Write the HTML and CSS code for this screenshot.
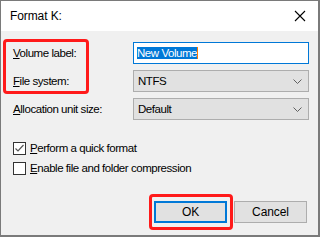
FILE: index.html
```html
<!DOCTYPE html>
<html>
<head>
<meta charset="utf-8">
<link rel="stylesheet" href="styles.css">
</head>
<body>
<div class="window">
  <div class="titlebar">
    <span class="title">Format K:</span>
    <svg class="close" width="12" height="12" viewBox="0 0 12 12"><path d="M1 1L11 11M11 1L1 11" stroke="#000" stroke-width="1.1" fill="none"/></svg>
  </div>
  <div class="content">
    <div class="form">
      <label class="lbl"><u>V</u>olume label:</label>
      <div class="input"><span class="sel">New Volume</span><span class="caret"></span></div>
      <label class="lbl"><u>F</u>ile system:</label>
      <div class="combo"><span>NTFS</span><svg class="chev" width="9" height="5" viewBox="0 0 9 5"><path d="M0.5 0.5L4.5 4.5L8.5 0.5" stroke="#606060" stroke-width="1" fill="none"/></svg></div>
      <label class="lbl"><u>A</u>llocation unit size:</label>
      <div class="combo"><span>Default</span><svg class="chev" width="9" height="5" viewBox="0 0 9 5"><path d="M0.5 0.5L4.5 4.5L8.5 0.5" stroke="#606060" stroke-width="1" fill="none"/></svg></div>
    </div>
    <div class="checks">
      <div class="check"><span class="box"><svg width="11" height="11" viewBox="0 0 11 11"><path d="M1.5 5.5L4 8L9.5 2" stroke="#555" stroke-width="1.2" fill="none"/></svg></span><span><u>P</u>erform a quick format</span></div>
      <div class="check"><span class="box"></span><span><u>E</u>nable file and folder compression</span></div>
    </div>
    <div class="buttons">
      <button class="btn primary">OK</button>
      <button class="btn">Cancel</button>
    </div>
    <div class="mark mark-labels"></div>
    <div class="mark mark-ok"></div>
  </div>
</div>
</body>
</html>
```
FILE: styles.css
```css
html, body { margin: 0; padding: 0; background: #ffffff; }
body { font-family: "Liberation Sans", Arial, sans-serif; font-size: 11.5px; letter-spacing: -0.45px; color: #000; }
.window {
  width: 320px; height: 237px; box-sizing: border-box;
  border: 1px solid #7a7a7a; border-right-width: 2px; border-bottom-width: 2px;
  display: flex; flex-direction: column; background: #f0f0f0;
}
.titlebar {
  height: 30px; background: #fff; display: flex; align-items: center;
  justify-content: space-between; padding: 0 12px 0 9px; flex: none;
}
.title { font-size: 12px; letter-spacing: -0.1px; }
.close { display: block; }
.content { position: relative; flex: 1; padding: 11px 0 0 12px; display: flex; flex-direction: column; }
.form { display: grid; grid-template-columns: 120px 176px; row-gap: 6px; align-items: center; }
.lbl { line-height: 22px; }
.input {
  height: 22px; box-sizing: border-box; border: 1px solid #0078d7; background: #fff;
  display: flex; align-items: center; padding-left: 3px;
}
.sel { background: #0078d7; color: #fff; line-height: 12px; }
.caret { width: 1px; height: 12px; background: #ff7800; }
.combo {
  height: 22px; box-sizing: border-box; border: 1px solid #adadad; background: #e1e1e1;
  display: flex; align-items: center; justify-content: space-between; padding: 0 6px 0 4px;
}
.chev { display: block; }
.checks { margin-top: 22px; display: flex; flex-direction: column; gap: 7px; }
.check { display: flex; align-items: center; gap: 4px; line-height: 13px; }
.box { width: 13px; height: 13px; box-sizing: border-box; border: 1px solid #333; background: #fff; display: flex; align-items: center; justify-content: center; }
.box svg { display: block; }
.buttons { margin-top: auto; margin-bottom: 12px; display: flex; justify-content: flex-end; gap: 7px; padding-right: 11px; }
.btn {
  width: 73px; height: 22px; box-sizing: border-box; border: 1px solid #adadad; background: #e1e1e1;
  font-family: inherit; font-size: 12px; letter-spacing: -0.1px; color: #000; padding: 0;
}
.btn.primary { border: 2px solid #0078d7; }
.mark { position: absolute; border: 3px solid #ff1a1a; border-radius: 4px; box-sizing: border-box; }
.mark-labels { left: 2px; top: 8px; width: 86px; height: 55px; }
.mark-ok { left: 148px; top: 163px; width: 84px; height: 36px; }
```
